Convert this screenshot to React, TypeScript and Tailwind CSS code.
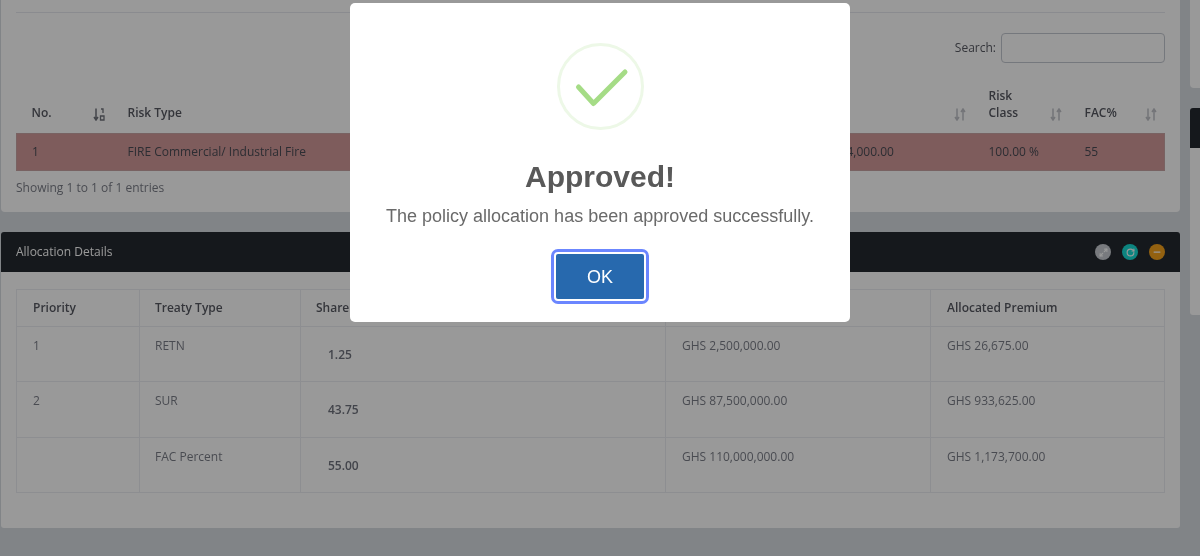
import { Maximize2, Minus, RotateCw } from "lucide-react";

const allocations = [
  { priority: "1", type: "RETN", share: "1.25", sum: "GHS 2,500,000.00", premium: "GHS 26,675.00", height: "h-[55px]" },
  { priority: "2", type: "SUR", share: "43.75", sum: "GHS 87,500,000.00", premium: "GHS 933,625.00", height: "h-[56px]" },
  { priority: "", type: "FAC Percent", share: "55.00", sum: "GHS 110,000,000.00", premium: "GHS 1,173,700.00", height: "h-[55px]" }
];

function SortIcon({ active = false }: { active?: boolean }) {
  return (
    <svg className={active ? "text-[#70737c]" : "text-[#c0c2c8]"} fill="none" height="13" viewBox="0 0 12 13" width="12">
      <path d="M3 0.5v11M1 9l2 3 2-3" stroke="currentColor" strokeWidth="1.5" />
      {active ? (
        <path d="M8 1h2v4M7.5 8h3.5v4H7.5z" stroke="currentColor" strokeWidth="1.3" />
      ) : (
        <path d="M9 12.5v-11M7 4l2-3 2 3" stroke="currentColor" strokeWidth="1.5" />
      )}
    </svg>
  );
}

function RiskTable() {
  return (
    <table className="w-[1148px] table-fixed border-collapse text-xs text-[#575962]">
      <colgroup>
        <col className="w-[96px]" />
        <col className="w-[683px]" />
        <col className="w-[178px]" />
        <col className="w-[96px]" />
        <col className="w-[95px]" />
      </colgroup>
      <thead>
        <tr className="h-[47px] align-bottom">
          <th className="pb-[12px] pl-[15px] pr-[8px] text-left font-semibold">
            <div className="flex items-end justify-between">
              No.
              <SortIcon active />
            </div>
          </th>
          <th className="pb-[12px] pl-[15px] text-left font-semibold">Risk Type</th>
          <th className="pb-[12px] pr-[8px] text-left font-semibold">
            <div className="flex items-end justify-end">
              <SortIcon />
            </div>
          </th>
          <th className="pb-[12px] pl-[15px] pr-[8px] text-left font-semibold">
            <div className="flex items-end justify-between leading-[17px]">
              <span>
                Risk
                <br />
                Class
              </span>
              <SortIcon />
            </div>
          </th>
          <th className="pb-[12px] pl-[15px] pr-[8px] text-left font-semibold">
            <div className="flex items-end justify-between">
              FAC%
              <SortIcon />
            </div>
          </th>
        </tr>
      </thead>
      <tbody>
        <tr className="h-[37px] border border-[#c9a3a3] bg-[#d29999] text-[#4a4c55]">
          <td className="pl-[15px]">1</td>
          <td className="pl-[15px]">FIRE Commercial/ Industrial Fire</td>
          <td>GHS 2,134,000.00</td>
          <td className="pl-[15px]">100.00 %</td>
          <td className="pl-[15px]">55</td>
        </tr>
      </tbody>
    </table>
  );
}

function AllocationTable() {
  return (
    <table className="w-[1148px] table-fixed border-collapse text-xs text-[#7b7e88]">
      <colgroup>
        <col className="w-[123px]" />
        <col className="w-[161px]" />
        <col className="w-[365px]" />
        <col className="w-[265px]" />
        <col className="w-[234px]" />
      </colgroup>
      <thead>
        <tr className="h-[37px] text-left text-[#575962]">
          <th className="border border-[#ebedf2] pl-[16px] font-semibold">Priority</th>
          <th className="border border-[#ebedf2] pl-[15px] font-semibold">Treaty Type</th>
          <th className="border border-[#ebedf2] pl-[15px] font-semibold">Share (%)</th>
          <th className="border border-[#ebedf2] pl-[16px] font-semibold">Allocated Sum Insured</th>
          <th className="border border-[#ebedf2] pl-[16px] font-semibold">Allocated Premium</th>
        </tr>
      </thead>
      <tbody>
        {allocations.map((row) => (
          <tr className={row.height} key={row.type}>
            <td className="border border-[#ebedf2] pl-[16px] pt-[11px] align-top">{row.priority}</td>
            <td className="border border-[#ebedf2] pl-[15px] pt-[11px] align-top">{row.type}</td>
            <td className="border border-[#ebedf2] pl-[27px] pt-[20px] align-top font-semibold text-[#6f727d]">{row.share}</td>
            <td className="border border-[#ebedf2] pl-[16px] pt-[11px] align-top">{row.sum}</td>
            <td className="border border-[#ebedf2] pl-[16px] pt-[11px] align-top">{row.premium}</td>
          </tr>
        ))}
      </tbody>
    </table>
  );
}

function Modal() {
  return (
    <div className="flex h-[319px] w-[500px] flex-col items-center rounded-[5px] bg-white pt-[40px]">
      <div className="flex h-[87px] w-[87px] items-center justify-center rounded-full border-[3px] border-[#edf8e7]">
        <svg className="shrink-0" fill="none" height="87" viewBox="0 0 87 87" width="87">
          <path d="M21.5 44 L36.5 60.5 L68 29" stroke="#a5dc86" strokeLinecap="round" strokeLinejoin="round" strokeWidth="5" />
        </svg>
      </div>
      <h2 className="mt-[29px] text-[30px] font-bold leading-[36px] text-[#595959]">Approved!</h2>
      <p className="mt-[9px] text-lg leading-[24px] text-[#6a6a6a]">The policy allocation has been approved successfully.</p>
      <button className="mt-[26px] h-[45px] w-[88px] rounded-[2px] bg-[#2769ae] text-lg text-white outline-[3px] outline-offset-[2px] outline-[#6b86ff]">
        OK
      </button>
    </div>
  );
}

export default function App() {
  return (
    <div className="relative h-[556px] w-[1200px] overflow-hidden bg-[#d8dce2] font-['Open_Sans',sans-serif] blur-[0.4px]">
      <div className="flex items-start gap-[10px] pl-px">
        <main className="w-[1179px] shrink-0">
          <section className="h-[212px] rounded-b-[4px] bg-white px-[15px]">
            <div className="h-[13px] border-b border-[#e6e8ee]" />
            <div className="mt-[20px] flex items-center justify-end gap-[5px] text-xs text-[#575962]">
              <span>Search:</span>
              <input className="h-[30px] w-[164px] rounded-[4px] border border-[#c4c8d0] bg-white" />
            </div>
            <div className="mt-[23px]">
              <RiskTable />
            </div>
            <p className="mt-[9px] text-xs text-[#7b7e88]">Showing 1 to 1 of 1 entries</p>
          </section>

          <section className="mt-[20px]">
            <div className="flex h-[40px] items-center justify-between rounded-t-[3px] bg-[#23282f] pl-[15px] pr-[15px] text-xs text-white">
              <span>Allocation Details</span>
              <div className="flex items-center gap-[11px]">
                <span className="flex h-[16px] w-[16px] items-center justify-center rounded-full bg-[#c8ccd2] text-white">
                  <Maximize2 size={9} strokeWidth={3} />
                </span>
                <span className="flex h-[16px] w-[16px] items-center justify-center rounded-full bg-[#15dcd4] text-white">
                  <RotateCw size={9} strokeWidth={3} />
                </span>
                <span className="flex h-[16px] w-[16px] items-center justify-center rounded-full bg-[#f5a21c] text-white">
                  <Minus size={10} strokeWidth={3} />
                </span>
              </div>
            </div>
            <div className="h-[256px] rounded-b-[3px] bg-white px-[15px] pt-[17px]">
              <AllocationTable />
            </div>
          </section>
        </main>

        <aside className="w-[40px] shrink-0">
          <div className="h-[88px] rounded-b-[4px] bg-white" />
          <div className="mt-[20px] h-[40px] rounded-t-[3px] bg-[#23282f]" />
          <div className="h-[167px] rounded-b-[3px] bg-white" />
        </aside>
      </div>

      {/* dimmed backdrop and dialog */}
      <div className="absolute inset-0 flex items-start justify-center bg-black/40 pt-[3px] font-['Liberation_Sans',sans-serif]">
        <Modal />
      </div>
    </div>
  );
}
